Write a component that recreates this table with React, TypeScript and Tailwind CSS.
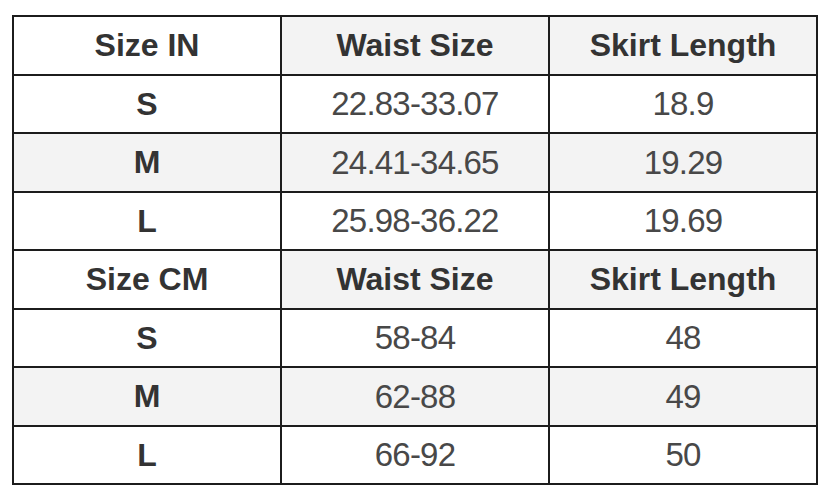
import React from "react";

type Row = { cells: string[]; head?: boolean; gray?: boolean };

const rows: Row[] = [
  { cells: ["Size IN", "Waist Size", "Skirt Length"], head: true },
  { cells: ["S", "22.83-33.07", "18.9"] },
  { cells: ["M", "24.41-34.65", "19.29"], gray: true },
  { cells: ["L", "25.98-36.22", "19.69"] },
  { cells: ["Size CM", "Waist Size", "Skirt Length"], head: true },
  { cells: ["S", "58-84", "48"] },
  { cells: ["M", "62-88", "49"], gray: true },
  { cells: ["L", "66-92", "50"] },
];

const App = () => {
  return (
    <div className="w-[823px] h-[489px] bg-white pl-[12px] pt-[15px] font-['Liberation_Sans',Arial,sans-serif]">
      <table className="w-[806px] h-[468px] border-collapse table-fixed">
        <tbody>
          {rows.map((row, i) => (
            <tr key={i} className={`h-[58.5px] ${row.gray ? "bg-[#f3f3f3]" : "bg-white"}`}>
              {row.cells.map((cell, j) => {
                // first column is always bold, header cells after it get grey
                const bold = row.head || j === 0;
                const headGray = row.head && j > 0;
                return (
                  <td
                    key={j}
                    className={`border-2 border-[#1c1c1c] p-0 text-center align-middle leading-none ${
                      headGray ? "bg-[#f3f3f3]" : ""
                    } ${
                      bold
                        ? "font-bold text-[32px] text-[#333]"
                        : "text-[33px] tracking-[-0.8px] text-[#484848]"
                    }`}
                  >
                    {cell}
                  </td>
                );
              })}
            </tr>
          ))}
        </tbody>
      </table>
    </div>
  );
};

export default App;
